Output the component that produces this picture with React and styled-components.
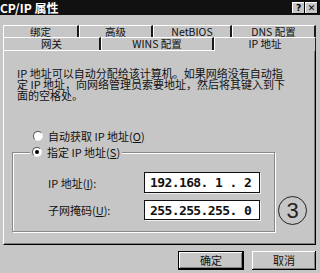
import React from "react";
import styled, { createGlobalStyle } from "styled-components";

const GlobalStyle = createGlobalStyle`
  html, body {
    margin: 0;
    padding: 0;
    background: #c6c6c6;
  }
  body {
    font-family: "Noto Sans CJK SC", "DejaVu Sans", sans-serif;
    color: #111;
  }
  * { box-sizing: border-box; }
`;

const topTabs = [
  { label: "绑定", width: 76 },
  { label: "高级", width: 74 },
  { label: "NetBIOS", width: 79 },
  { label: "DNS 配置", width: 84 },
];

const bottomTabs = [
  { label: "网关", width: 98 },
  { label: "WINS 配置", width: 113 },
  { label: "IP 地址", width: 102, active: true },
];

function App() {
  return (
    <Window>
      <GlobalStyle />
      <TitleBar>
        <Title>CP/IP 属性</Title>
        <Controls>
          <CtrlButton>?</CtrlButton>
          <CtrlButton>✕</CtrlButton>
        </Controls>
      </TitleBar>

      <TabArea>
        <TabRow $h={12}>
          {topTabs.map((t) => (
            <Tab key={t.label} $w={t.width}>
              {t.label}
            </Tab>
          ))}
        </TabRow>
        <TabRow $h={13}>
          {bottomTabs.map((t) => (
            <Tab key={t.label} $w={t.width} $active={t.active}>
              {t.label}
            </Tab>
          ))}
        </TabRow>
      </TabArea>

      <Panel>
        <Desc>
          IP 地址可以自动分配给该计算机。如果网络没有自动指
          <br />
          定 IP 地址，向网络管理员索要地址，然后将其键入到下
          <br />
          面的空格处。
        </Desc>

        <RadioRow>
          <Radio />
          <span>
            自动获取 IP 地址(<u>O</u>)
          </span>
        </RadioRow>

        <GroupRow>
          <Group>
            <Legend>
              <Radio $checked />
              <span>
                指定 IP 地址(<u>S</u>)
              </span>
            </Legend>
            <Field $top={13}>
              <FieldLabel>
                IP 地址(<u>I</u>):
              </FieldLabel>
              <IpBox $h={21}>192.168. 1 . 2</IpBox>
            </Field>
            <Field $top={7}>
              <FieldLabel>
                子网掩码(<u>U</u>):
              </FieldLabel>
              <IpBox $h={20}>255.255.255. 0</IpBox>
            </Field>
          </Group>
          <Circled>3</Circled>
        </GroupRow>
      </Panel>

      <Footer>
        <Button $w={66} $default>
          确定
        </Button>
        <Button $w={64}>取消</Button>
      </Footer>
    </Window>
  );
}

export default App;

const Window = styled.div`
  width: 320px;
  height: 273px;
  overflow: hidden;
  background: #c6c6c6;
`;

const TitleBar = styled.div`
  height: 15px;
  background: #111;
  color: #fff;
  display: flex;
  align-items: center;
  justify-content: space-between;
`;

const Title = styled.div`
  font-size: 12px;
  font-weight: 700;
  line-height: 15px;
`;

const Controls = styled.div`
  display: flex;
  padding-right: 2px;
`;

const CtrlButton = styled.div`
  width: 13px;
  height: 12px;
  background: #c6c6c6;
  color: #000;
  font-family: "DejaVu Sans", sans-serif;
  font-weight: 700;
  font-size: 9px;
  line-height: 12px;
  text-align: center;
  box-shadow: inset -1px -1px 0 #000, inset 1px 1px 0 #fff;
`;

const TabArea = styled.div`
  margin-top: 10px;
  padding-left: 3px;
`;

const TabRow = styled.div`
  display: flex;
  height: ${(p) => p.$h}px;
`;

const Tab = styled.div`
  width: ${(p) => p.$w}px;
  height: ${(p) => (p.$active ? "calc(100% + 1px)" : "100%")};
  position: relative;
  z-index: ${(p) => (p.$active ? 2 : 1)};
  background: #c6c6c6;
  border-top: 1px solid #fff;
  border-left: 1px solid #fff;
  border-right: ${(p) => (p.$active ? "1px solid #222" : "2px solid #1a1a1a")};
  font-size: 10.5px;
  line-height: 11px;
  text-align: center;
  white-space: nowrap;
`;

const Panel = styled.div`
  width: 313px;
  height: 195px;
  margin-left: 3px;
  background: #c6c6c6;
  border-top: 1px solid #fff;
  border-left: 1px solid #fff;
  border-right: 1px solid #000;
  border-bottom: 1px solid #000;
  box-shadow: inset -1px -1px 0 #808080;
  padding-top: 17px;
`;

const Desc = styled.p`
  margin: 0 0 0 13px;
  font-size: 11px;
  line-height: 11px;
  white-space: nowrap;
`;

const RadioRow = styled.div`
  display: flex;
  align-items: center;
  gap: 5px;
  height: 14px;
  margin: 28px 0 0 29px;
  font-size: 11px;
`;

const Radio = styled.span`
  width: 10px;
  height: 10px;
  border-radius: 50%;
  background: #fff;
  border: 1px solid;
  border-color: #555 #eee #eee #555;
  display: flex;
  align-items: center;
  justify-content: center;
  flex-shrink: 0;

  &::after {
    content: "";
    width: 4px;
    height: 4px;
    border-radius: 50%;
    background: ${(p) => (p.$checked ? "#000" : "transparent")};
  }
`;

const GroupRow = styled.div`
  display: flex;
  align-items: flex-end;
  margin: 2px 0 0 8px;
`;

const Group = styled.fieldset`
  width: 263px;
  margin: 0;
  padding: 0 0 11px 0;
  border: 1px solid #888;
  box-shadow: inset 1px 1px 0 #fff, 1px 1px 0 #fff;
  min-width: 0;
`;

const Legend = styled.legend`
  display: flex;
  align-items: center;
  gap: 5px;
  height: 14px;
  margin-left: 17px;
  padding: 0 2px;
  background: #c6c6c6;
  font-size: 11px;
`;

const Field = styled.div`
  display: flex;
  align-items: center;
  margin-top: ${(p) => p.$top}px;
  padding-left: 35px;
`;

const FieldLabel = styled.span`
  width: 96px;
  font-size: 11px;
`;

const IpBox = styled.div`
  width: 116px;
  height: ${(p) => p.$h}px;
  background: #fff;
  border: 1px solid #111;
  box-shadow: 1px 1px 0 #eee;
  padding-left: 5px;
  display: flex;
  align-items: center;
  white-space: pre;
  font-family: "DejaVu Sans Mono", "Liberation Mono", monospace;
  font-weight: 700;
  font-size: 13px;
  letter-spacing: -0.6px;
  color: #111;
`;

const Circled = styled.div`
  width: 29px;
  height: 29px;
  margin: 0 0 7px 3px;
  border: 1px solid #222;
  border-radius: 50%;
  display: flex;
  align-items: center;
  justify-content: center;
  font-family: "Liberation Sans", sans-serif;
  font-size: 22px;
  line-height: 1;
  color: #222;
`;

const Footer = styled.div`
  display: flex;
  justify-content: flex-end;
  gap: 8px;
  padding: 6px 4px 0 0;
`;

const Button = styled.div`
  width: ${(p) => p.$w}px;
  height: 19px;
  background: #c6c6c6;
  border: ${(p) => (p.$default ? "1px solid #000" : "none")};
  box-shadow: inset -1px -1px 0 #000, inset 1px 1px 0 #fff,
    inset -2px -2px 0 #808080;
  font-size: 11px;
  line-height: 19px;
  text-align: center;
  display: flex;
  align-items: center;
  justify-content: center;
`;
